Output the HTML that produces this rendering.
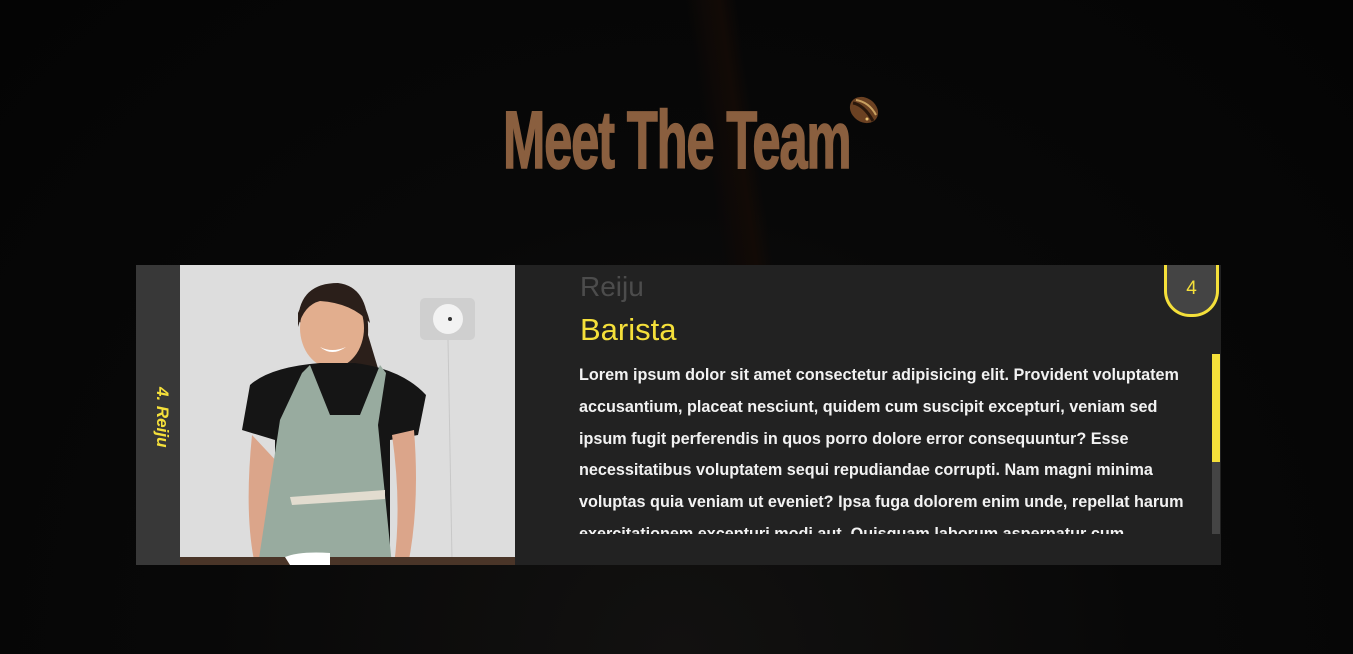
<!DOCTYPE html>
<html><head><meta charset="utf-8"><style>
*{margin:0;padding:0;box-sizing:border-box}
body{width:1353px;height:654px;overflow:hidden;background:#050505;font-family:"Liberation Sans",sans-serif;position:relative}
.bg{position:absolute;inset:0;background:radial-gradient(ellipse at 50% 100%,#121110 0%,#080808 50%,#040404 100%)}
.streak{position:absolute;left:705px;top:0;width:50px;height:270px;background:linear-gradient(90deg,transparent,#0e0907,#120a06,transparent);transform:skewX(8deg)}
h1{position:absolute;left:503px;top:96px;font-weight:bold;font-size:82px;color:#8a5f3f;letter-spacing:-2px;transform:scaleX(0.62);transform-origin:left;line-height:90px;white-space:nowrap;-webkit-text-stroke:1.5px #8a5f3f}
.bean{position:absolute;left:847px;top:93px}
.card{position:absolute;left:136px;top:265px;width:1085px;height:300px;background:#222}
.strip{position:absolute;left:0;top:0;width:44px;height:300px;background:#383838}
.strip span{position:absolute;left:8px;top:150px;transform-origin:left top;transform:rotate(90deg) translate(-28px,-28px);color:#f5e03a;font-weight:bold;font-style:italic;font-size:17px;white-space:nowrap}
.photo{position:absolute;left:44px;top:0;width:335px;height:300px;background:#dcdcdc;overflow:hidden}
.name{position:absolute;left:444px;top:6px;font-size:28px;color:#4c4c4c}
.role{position:absolute;left:444px;top:47px;font-size:31px;color:#f5e03a}
.txt{position:absolute;left:443px;top:95px;width:630px;height:174px;overflow:hidden;color:#f2f2f2;font-weight:bold;font-size:16.2px;line-height:31.8px}
.badge{position:absolute;left:1028px;top:0;width:55px;height:52px;background:#444;border:3px solid #f5e03a;border-top:none;border-radius:0 0 26px 26px;color:#f5e03a;font-size:19px;text-align:center;line-height:48px}
.sb{position:absolute;left:1076px;top:89px;width:8px;height:180px;background:#444}
.sb i{display:block;width:8px;height:108px;background:#f5e03a}
</style></head><body>
<div class="bg"></div><div class="streak"></div>
<h1>Meet The Team</h1>
<svg class="bean" width="34" height="34" viewBox="0 0 34 34"><ellipse cx="17" cy="17" rx="15" ry="12" transform="rotate(35 17 17)" fill="#6b4122"/><path d="M6 10 Q17 12 26 28" stroke="#2a170b" stroke-width="3" fill="none"/><path d="M9 7 Q22 9 29 22" stroke="#c9a060" stroke-width="2" fill="none"/><circle cx="20" cy="26" r="1.5" fill="#e8c070"/></svg>
<div class="card">
<div class="strip"><span>4. Reiju</span></div>
<div class="photo">
<svg width="335" height="300" viewBox="0 0 335 300">
<rect width="335" height="300" fill="#dddddd"/>
<rect x="240" y="33" width="55" height="42" rx="5" fill="#cfcfcf"/><circle cx="268" cy="54" r="15" fill="#f2f2f2"/><circle cx="270" cy="54" r="2" fill="#333"/>
<line x1="268" y1="75" x2="272" y2="295" stroke="#c8c8c8"/>
<path d="M118 55 Q120 18 158 18 Q190 22 188 70 L200 110 L230 140 L190 140 L180 120 Z" fill="#2b1f1a"/>
<ellipse cx="152" cy="63" rx="32" ry="40" fill="#e2ae8e"/>
<path d="M118 48 Q130 20 160 22 Q184 28 190 58 Q172 38 140 36 Q124 40 118 62 Z" fill="#2b1f1a"/>
<path d="M140 82 Q152 92 166 82 Q152 88 140 82Z" fill="#fff"/>
<path d="M70 120 Q90 102 140 98 L175 98 Q222 104 246 130 L238 170 L210 175 L210 300 L95 300 L95 175 L62 165 Z" fill="#151515"/>
<path d="M100 200 Q88 250 90 300 L75 300 Q64 250 72 170 Z" fill="#dba58a"/>
<path d="M212 170 Q222 240 214 300 L228 300 Q240 240 234 165 Z" fill="#dba58a"/>
<path d="M122 108 L130 100 L150 150 L180 150 L200 100 L206 108 L198 160 L212 300 L78 300 L100 155 Z" fill="#98ab9f"/>
<path d="M110 232 L205 225 L205 234 L112 240 Z" fill="#e2dccf"/>
<rect x="0" y="292" width="335" height="8" fill="#4a3528"/>
<path d="M105 292 Q120 286 150 288 L150 300 L110 300 Z" fill="#fff"/>
</svg></div>
<div class="name">Reiju</div>
<div class="role">Barista</div>
<div class="txt">Lorem ipsum dolor sit amet consectetur adipisicing elit. Provident voluptatem accusantium, placeat nesciunt, quidem cum suscipit excepturi, veniam sed ipsum fugit perferendis in quos porro dolore error consequuntur? Esse necessitatibus voluptatem sequi repudiandae corrupti. Nam magni minima voluptas quia veniam ut eveniet? Ipsa fuga dolorem enim unde, repellat harum exercitationem excepturi modi aut. Quisquam laborum aspernatur cum.</div>
<div class="badge">4</div>
<div class="sb"><i></i></div>
</div>
</body></html>
